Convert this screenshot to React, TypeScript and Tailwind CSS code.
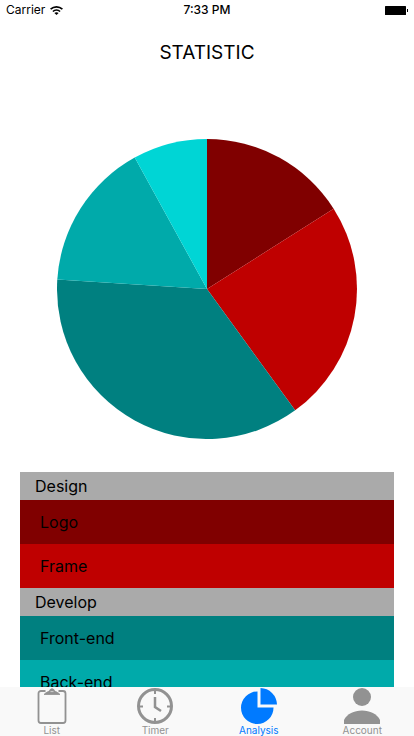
import type { ReactNode } from "react";

type Task = { name: string; share: number; fill: string; row: string };
type Group = { name: string; tasks: Task[] };

const groups: Group[] = [
  {
    name: "Design",
    tasks: [
      { name: "Logo", share: 16, fill: "#800000", row: "bg-[#800000]" },
      { name: "Frame", share: 24, fill: "#bf0000", row: "bg-[#bf0000]" },
    ],
  },
  {
    name: "Develop",
    tasks: [
      { name: "Front-end", share: 36, fill: "#008080", row: "bg-[#008080]" },
      { name: "Back-end", share: 16, fill: "#00aaaa", row: "bg-[#00aaaa]" },
    ],
  },
];

const slices = [
  ...groups.flatMap((g) => g.tasks.map(({ share, fill }) => ({ share, fill }))),
  { share: 8, fill: "#00d5d5" },
];

function PieChart() {
  let start = 0;
  const point = (share: number) => {
    const a = (share / 100) * Math.PI * 2;
    return `${150 + 150 * Math.sin(a)} ${150 - 150 * Math.cos(a)}`;
  };
  return (
    <svg viewBox="0 0 300 300" className="size-[300px]" aria-hidden="true">
      {slices.map((s) => {
        const from = start;
        start += s.share;
        return (
          <path
            key={s.fill}
            d={`M150 150L${point(from)}A150 150 0 0 1 ${point(start)}Z`}
            fill={s.fill}
          />
        );
      })}
    </svg>
  );
}

function StatusBar() {
  return (
    <div className="grid h-5 shrink-0 grid-cols-3 items-center px-1.5 text-xs">
      <div className="flex items-center gap-[5px]">
        <span>Carrier</span>
        <svg viewBox="0 0 13 9" className="h-[9px] w-[13px]" fill="none" stroke="#000" strokeWidth="1.6">
          <path d="M.6 3.2C3.9.1 9.1.1 12.4 3.2" />
          <path d="M2.9 5.5c2-1.9 5.2-1.9 7.2 0" />
          <path d="M6.5 9L4.4 7c1.1-1.1 3.1-1.1 4.2 0Z" fill="#000" stroke="none" />
        </svg>
      </div>
      <span className="text-center font-medium">7:33 PM</span>
      <svg viewBox="0 0 23 9" className="h-[9px] w-[23px] justify-self-end">
        <rect width="21" height="9" rx="0.5" />
        <rect x="22" width="1" y="3" height="3" />
      </svg>
    </div>
  );
}

const tabs: { name: string; icon: ReactNode }[] = [
  {
    name: "List",
    icon: (
      <g fill="none" stroke="currentColor" strokeWidth="1.8">
        <path d="M11.5 3H7a2.500 2.500 0 0 0-2.500 2.500V32.500A2.500 2.500 0 0 0 7 35h22a2.500 2.500 0 0 0 2.500-2.500V5.500A2.500 2.500 0 0 0 29 3h-4.500" />
        <path
          d="M10 6.500C11.500 4.500 14 4 15.500 2.800C16 .2 20 .2 20.500 2.800C22 4 24.500 4.500 26 6.500Z"
          fill="currentColor"
          strokeWidth="0.8"
        />
        <path d="M16.500 3.600h3" stroke="#d0d0d0" strokeWidth="1" />
      </g>
    ),
  },
  {
    name: "Timer",
    icon: (
      <g fill="none" stroke="currentColor" strokeWidth="2">
        <circle cx="18" cy="18" r="16.5" strokeWidth="3" />
        <path d="M18 2v4M18 30v4M2 18.5h4M30 18.5h4" />
        <path d="M18 9v10l6 4" strokeWidth="2.5" />
      </g>
    ),
  },
  {
    name: "Analysis",
    icon: (
      <g fill="currentColor">
        <path d="M16.5 3.5A16.25 16.25 0 1 0 32.5 19.5h-16Z" />
        <path d="M19.5 0A17 17 0 0 1 36 16.5H19.5Z" />
      </g>
    ),
  },
  {
    name: "Account",
    icon: (
      <g fill="currentColor">
        <circle cx="18" cy="9" r="9" />
        <path d="M0 36V32C3 26 10 22.5 18 22.5S33 26 36 32V36Z" />
      </g>
    ),
  },
];

export default function App() {
  return (
    <div className="flex h-screen flex-col overflow-hidden bg-white font-['Inter',sans-serif] text-black">
      <StatusBar />
      <h1 className="shrink-0 pt-4 text-center text-[19px] leading-[34px]">STATISTIC</h1>
      <main className="flex min-h-0 flex-1 flex-col px-5">
        <div className="flex shrink-0 justify-center pt-[69px] pb-[33px]">
          <PieChart />
        </div>
        <div className="min-h-0 flex-1 overflow-hidden">
          {groups.map((g) => (
            <section key={g.name}>
              <h2 className="bg-[#aaaaaa] pl-[15px] text-base leading-7">{g.name}</h2>
              <ul>
                {g.tasks.map((t) => (
                  <li key={t.name} className={`pl-5 text-base leading-11 ${t.row}`}>
                    {t.name}
                  </li>
                ))}
              </ul>
            </section>
          ))}
        </div>
      </main>
      <nav className="grid h-[49px] shrink-0 grid-cols-4 bg-[#f9f9f9]">
        {tabs.map((t) => (
          <button
            key={t.name}
            type="button"
            className={`flex flex-col items-center pt-px text-[10px] leading-3 ${
              t.name === "Analysis" ? "text-[#007aff]" : "text-[#929292]"
            }`}
          >
            <svg viewBox="0 0 36 36" className="size-9">
              {t.icon}
            </svg>
            {t.name}
          </button>
        ))}
      </nav>
    </div>
  );
}
